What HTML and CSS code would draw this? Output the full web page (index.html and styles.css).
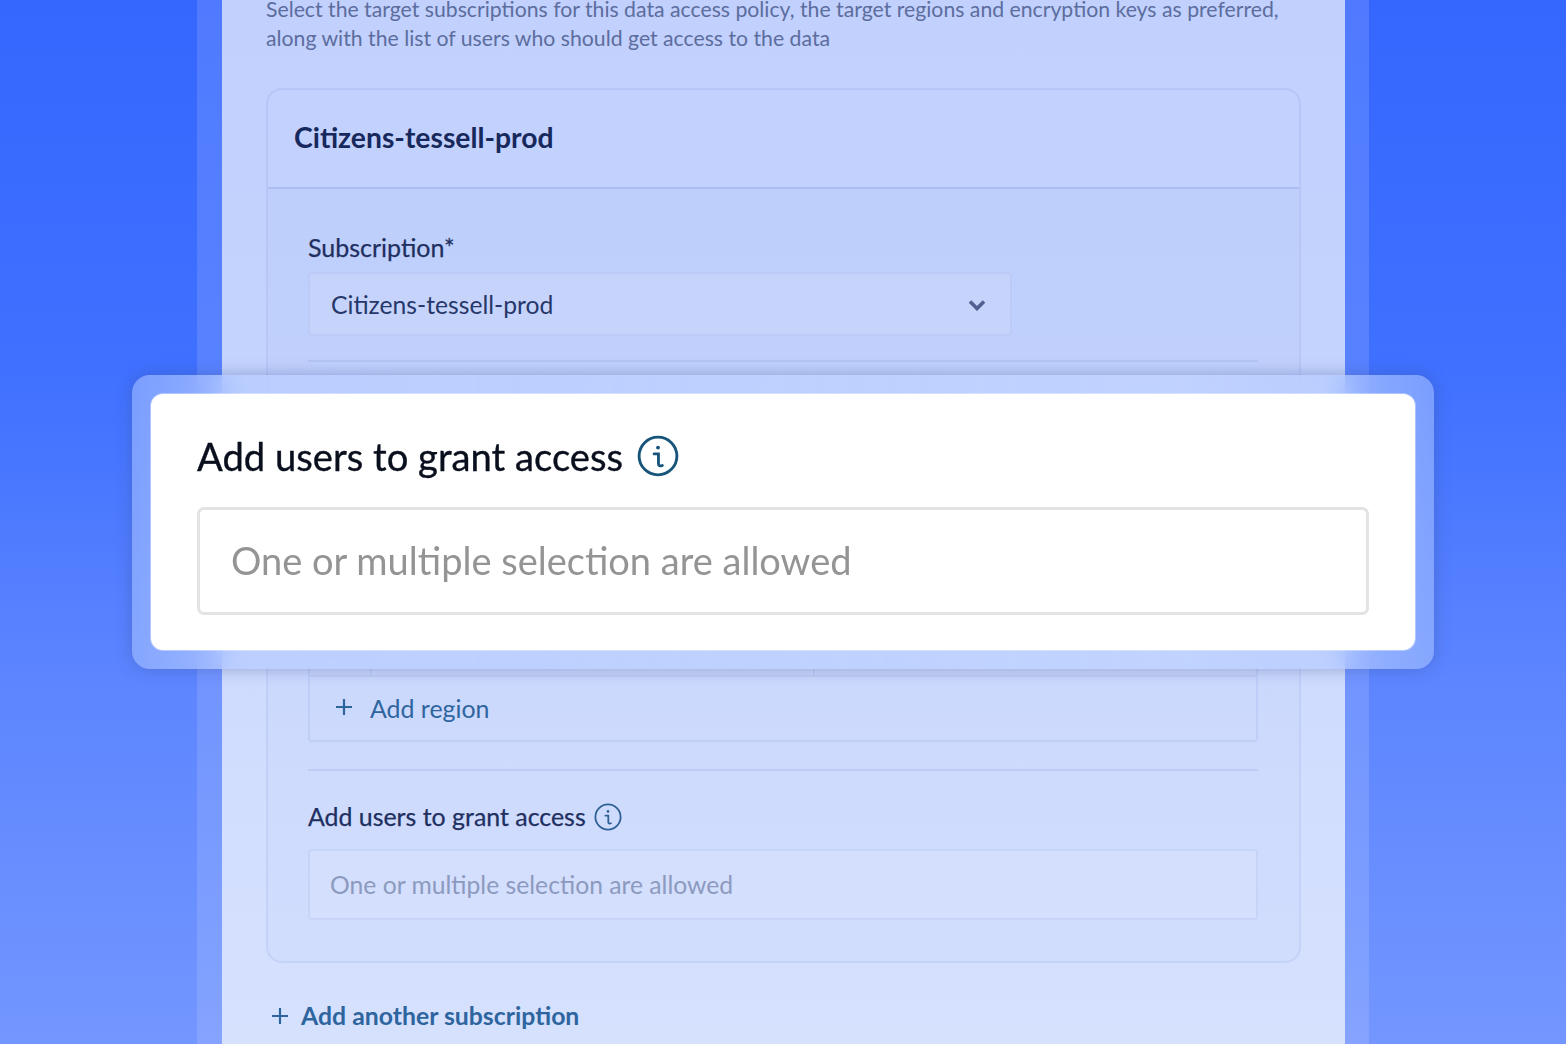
FILE: index.html
```html
<!DOCTYPE html>
<html lang="en">
<head>
<meta charset="utf-8">
<title>Add users to grant access</title>
<link rel="stylesheet" href="styles.css">
</head>
<body>
<div class="stage">
  <div class="band">
    <main class="panel">
      <p class="intro">Select the target subscriptions for this data access policy, the target regions and encryption keys as preferred, along with the list of users who should get access to the data</p>
      <section class="card">
        <h2 class="card-title">Citizens-tessell-prod</h2>
        <div class="card-body">
          <label class="label">Subscription*</label>
          <div class="select">
            <span>Citizens-tessell-prod</span>
            <svg class="chevron" viewBox="0 0 18 12" aria-hidden="true"><path d="M2 2.5 9 9.5 16 2.5"/></svg>
          </div>
          <hr class="rule rule-first">
          <div class="regions">
            <div class="region-row">
              <div class="cell cell-a"></div>
              <div class="cell cell-b"></div>
              <div class="cell cell-c"></div>
            </div>
            <div class="add-region">
              <svg class="plus" viewBox="0 0 18 18" aria-hidden="true"><path d="M9 1v16M1 9h16"/></svg>
              <span class="add-region-text">Add region</span>
            </div>
          </div>
          <hr class="rule rule-second">
          <div class="label label-info">
            <span>Add users to grant access</span>
            <svg class="info info-small" viewBox="0 0 28 28" aria-hidden="true"><circle cx="14" cy="14" r="12.6"/><path d="M11.4 12.6h2.9v6.6c0 1.3 1 1.8 2.6 1.1"/><circle class="dot" cx="14" cy="8.4" r="1.3"/></svg>
          </div>
          <div class="input">One or multiple selection are allowed</div>
        </div>
      </section>
      <div class="add-sub">
        <svg class="plus" viewBox="0 0 18 18" aria-hidden="true"><path d="M9 1v16M1 9h16"/></svg>
        <span>Add another subscription</span>
      </div>
    </main>
  </div>
  <aside class="callout">
    <div class="callout-card">
      <div class="callout-head">
        <span>Add users to grant access</span>
        <svg class="info info-big" viewBox="0 0 28 28" aria-hidden="true"><circle cx="14" cy="14" r="12.6"/><path d="M11.4 12.6h2.9v6.6c0 1.3 1 1.8 2.6 1.1"/><circle class="dot" cx="14" cy="8.4" r="1.3"/></svg>
      </div>
      <div class="callout-input">One or multiple selection are allowed</div>
    </div>
  </aside>
</div>
</body>
</html>
```
FILE: styles.css
```css
* { box-sizing: border-box; }
html, body { margin: 0; height: 100%; }
body { font-family: "Lato", "Liberation Sans", sans-serif; overflow: hidden; }

.stage {
  position: relative;
  width: 1566px;
  height: 1044px;
  overflow: hidden;
  display: flex;
  justify-content: center;
  background: linear-gradient(180deg, #3567ff 0%, #3f70ff 35%, #5c85ff 65%, #7396ff 100%);
}

.band {
  width: 1172px;
  height: 100%;
  padding: 0 24px 0 25px;
  background: rgba(255, 255, 255, .13);
}

.panel {
  height: 100%;
  padding: 0 44px;
  background: linear-gradient(180deg, #c1d0fd 0%, #c5d4fd 40%, #d2defe 75%, #d6e1fe 100%);
  overflow: hidden;
}

.intro {
  margin: -5.5px 0 0;
  width: 1035px;
  font-size: 21.23px;
  line-height: 29px;
  color: #5c6d9e;
}

.card {
  margin-top: 35.5px;
  width: 1035px;
  height: 875px;
  border: 2px solid rgba(120, 145, 215, .16);
  border-radius: 16px;
}

.card-title {
  margin: 0;
  height: 99px;
  padding: 0 26px 3px;
  display: flex;
  align-items: center;
  font-size: 28.3px;
  font-weight: 700;
  color: #17285c;
  border-bottom: 2px solid rgba(110, 135, 210, .26);
}

.card-body {
  padding: 45px 40px 0;
  background: rgba(100, 125, 210, .03);
  border-radius: 0 0 14px 14px;
  height: 772px;
}

.label {
  display: block;
  height: 27px;
  margin: 0 0 11px;
  font-size: 25px;
  line-height: 27px;
  color: #1e2f60;
  -webkit-text-stroke: .25px #1e2f60;
}

.select {
  width: 704px;
  height: 64px;
  padding: 0 24px 0 21px;
  display: flex;
  align-items: center;
  justify-content: space-between;
  font-size: 24.7px;
  color: #26376a;
  background: rgba(255, 255, 255, .1);
  border: 2px solid rgba(120, 145, 215, .14);
  border-radius: 4px;
}

.chevron { width: 18px; height: 12px; margin-top: 1px; }
.chevron path { fill: none; stroke: #4f5f8f; stroke-width: 3.6; }

.rule {
  margin: 0;
  width: 950px;
  height: 2px;
  border: 0;
  background: rgba(110, 130, 195, .15);
}
.rule-first { margin-top: 24px; }
.rule-second { margin-top: 27px; }

.regions { height: 380px; display: flex; flex-direction: column; justify-content: flex-end; width: 950px; }

.region-row {
  display: flex;
  height: 40px;
  border: 2px solid rgba(110, 130, 195, .12);
}
.cell { height: 100%; border-right: 2px solid rgba(110, 130, 195, .12); }
.cell-a { width: 62px; }
.cell-b { width: 443px; }
.cell-c { flex: 1; border-right: 0; }

.add-region {
  height: 65px;
  padding: 0 24px 0 25px;
  display: flex;
  align-items: center;
  gap: 17px;
  font-size: 24.9px;
  color: #2f659f;
  border: 2px solid rgba(120, 145, 215, .14);
  border-top: 0;
  border-radius: 0 0 4px 4px;
}
.add-region-text { margin-top: -2px; }

.plus { width: 18px; height: 18px; flex: none; margin-top: -4px; }
.plus path { fill: none; stroke: #2f659f; stroke-width: 2.2; }

.label-info {
  display: flex;
  align-items: center;
  gap: 8px;
  margin-top: 32px;
  margin-bottom: 19px;
  height: 27px;
  font-size: 24.9px;
}

.info { flex: none; }
.info circle { fill: none; stroke: #2f6095; stroke-width: 1.8; }
.info path { fill: none; stroke: #2f6095; stroke-width: 1.8; stroke-linecap: round; }
.info .dot { fill: #2f6095; stroke: none; }
.info-small { width: 28px; height: 28px; }
.info-big { width: 42px; height: 42px; }
.info-big circle, .info-big path { stroke: #17547a; stroke-width: 1.9; }
.info-big .dot { fill: #17547a; stroke: none; }

.input {
  width: 950px;
  height: 71px;
  padding: 0 20px;
  display: flex;
  align-items: center;
  font-size: 24.7px;
  color: #8d9abf;
  background: rgba(255, 255, 255, .1);
  border: 2px solid rgba(120, 145, 215, .15);
  border-radius: 4px;
}

.add-sub {
  display: flex;
  align-items: center;
  gap: 12px;
  margin: 38px 0 0 5px;
  font-size: 24.8px;
  font-weight: 700;
  color: #2f659f;
}
.add-sub .plus { margin-top: 0; }

.callout {
  position: absolute;
  left: 132px;
  top: 375px;
  width: 1302px;
  height: 294px;
  padding: 19px;
  border-radius: 18px;
  background: linear-gradient(90deg, rgba(170, 195, 255, .55) 0%, rgba(185, 205, 255, .8) 12%, rgba(192, 210, 255, .9) 80%, rgba(170, 195, 255, .55) 100%);
  box-shadow: 0 0 16px rgba(60, 80, 150, .4);
  backdrop-filter: blur(14px);
}

.callout-card {
  height: 100%;
  padding: 41px 46px 35px;
  background: #fff;
  border-radius: 12px;
  box-shadow: 0 0 0 1px rgba(255, 255, 255, .35);
}

.callout-head {
  display: flex;
  align-items: center;
  gap: 14px;
  height: 42px;
  font-size: 38.2px;
  color: #0a0f1e;
  -webkit-text-stroke: .35px #0a0f1e;
}

.callout-input {
  margin-top: 30px;
  height: 108px;
  padding: 0 31px 2px;
  display: flex;
  align-items: center;
  font-size: 38px;
  color: #949494;
  border: 3px solid #e3e3e3;
  border-radius: 7px;
}
```
